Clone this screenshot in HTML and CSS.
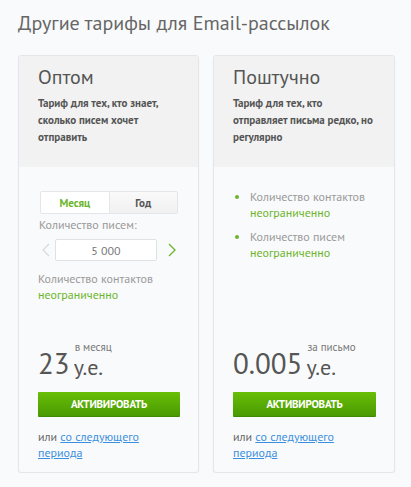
FILE: index.html
```html
<!DOCTYPE html>
<html lang="ru">
<head>
<meta charset="utf-8">
<title>Тарифы</title>
<link rel="stylesheet" href="styles.css">
</head>
<body>
<h1 class="title">Другие тарифы для Email-рассылок</h1>
<div class="cards">
  <div class="card">
    <div class="card-head">
      <div class="card-name">Оптом</div>
      <div class="card-desc">Тариф для тех, кто знает, сколько писем хочет отправить</div>
    </div>
    <div class="card-body">
      <div class="tabs">
        <div class="tab tab-active">Месяц</div>
        <div class="tab">Год</div>
      </div>
      <div class="label">Количество писем:</div>
      <div class="stepper">
        <span class="arrow arrow-off"><svg width="8" height="14" viewBox="0 0 8 14"><path d="M7 1 1 7l6 6" fill="none" stroke="currentColor" stroke-width="1.3"/></svg></span>
        <div class="num">5 000</div>
        <span class="arrow arrow-on"><svg width="8" height="14" viewBox="0 0 8 14"><path d="M1 1l6 6-6 6" fill="none" stroke="currentColor" stroke-width="1.3"/></svg></span>
      </div>
      <div class="feature">
        <div class="label">Количество контактов</div>
        <div class="green">неограниченно</div>
      </div>
      <div class="bottom">
        <div class="price">
          <span class="price-num">23</span>
          <span class="price-unit">
            <span class="price-per">в месяц</span>
            <span class="price-cur">у.е.</span>
          </span>
        </div>
        <button class="btn">АКТИВИРОВАТЬ</button>
        <div class="next"><span>или</span> <a href="#">со следующего</a> <a href="#">периода</a></div>
      </div>
    </div>
  </div>
  <div class="card">
    <div class="card-head">
      <div class="card-name">Поштучно</div>
      <div class="card-desc">Тариф для тех, кто отправляет письма редко, но регулярно</div>
    </div>
    <div class="card-body card-body-list">
      <ul class="list">
        <li><span class="label">Количество контактов</span><span class="green">неограниченно</span></li>
        <li><span class="label">Количество писем</span><span class="green">неограниченно</span></li>
      </ul>
      <div class="bottom">
        <div class="price">
          <span class="price-num">0.005</span>
          <span class="price-unit">
            <span class="price-per">за письмо</span>
            <span class="price-cur">у.е.</span>
          </span>
        </div>
        <button class="btn">АКТИВИРОВАТЬ</button>
        <div class="next"><span>или</span> <a href="#">со следующего</a> <a href="#">периода</a></div>
      </div>
    </div>
  </div>
</div>
</body>
</html>
```

FILE: styles.css
```css
* { box-sizing: border-box; }
html, body { margin: 0; }
body {
  background: #f9fafb;
  font-family: "PT Sans", Roboto, "Noto Sans", sans-serif;
  color: #555;
  padding: 11px 16px 0 18px;
}
.title {
  margin: 0;
  font-size: 20px;
  line-height: 24px;
  font-weight: 400;
  color: #666;
}
.cards {
  margin-top: 20px;
  display: grid;
  grid-template-columns: 181px 182px;
  column-gap: 14px;
}
.card {
  height: 418px;
  border: 1px solid #e3e6ea;
  border-radius: 3px;
  background: #f9fafb;
  box-shadow: 0 1px 2px rgba(0,0,0,0.04);
  display: flex;
  flex-direction: column;
  overflow: hidden;
}
.card-head {
  height: 111px;
  flex: none;
  background: #f1f2f1;
  padding: 9px 19px 0;
}
.card-name {
  font-size: 20px;
  line-height: 24px;
  font-weight: 300;
  color: #555;
}
.card-desc {
  margin-top: 6px;
  font-size: 11px;
  line-height: 17px;
  font-weight: 700;
  color: #555;
}
.card-body {
  flex: 1;
  display: flex;
  flex-direction: column;
  padding: 24px 18px 11px 19px;
}
.tabs {
  display: flex;
  margin-left: 2px;
  width: 138px;
  height: 23px;
  border: 1px solid #e4e6e8;
  border-radius: 2px;
  overflow: hidden;
}
.tab {
  flex: 1;
  display: flex;
  align-items: center;
  justify-content: center;
  font-size: 11px;
  font-weight: 700;
  color: #555;
  background: linear-gradient(#fafafa, #f0f0f0);
}
.tab + .tab { border-left: 1px solid #e4e6e8; }
.tab-active { background: #fff; color: #6cb52b; }
.label {
  display: block;
  font-size: 12px;
  line-height: 16px;
  color: #999;
}
.tabs + .label { margin-top: 3px; margin-left: 1px; }
.green {
  display: block;
  font-size: 12px;
  line-height: 16px;
  color: #6cb52b;
}
.stepper {
  display: flex;
  align-items: center;
  margin-top: 6px;
  height: 22px;
}
.arrow { width: 17px; display: flex; justify-content: center; }
.arrow-off { color: #d8dadc; }
.arrow-on { color: #6cb52b; margin-left: 6px; }
.num {
  width: 106px;
  height: 22px;
  background: #fff;
  border: 1px solid #dfe2e5;
  border-radius: 2px;
  display: flex;
  align-items: center;
  justify-content: center;
  font-size: 12px;
  color: #777;
}
.feature { margin-top: 10px; }
.bottom { margin-top: auto; }
.price {
  display: flex;
  align-items: flex-end;
}
.price-num {
  font-size: 29px;
  line-height: 28px;
  font-weight: 300;
  color: #555;
}
.price-unit {
  display: flex;
  flex-direction: column;
  margin-left: 4px;
}
.price-per {
  font-size: 11px;
  line-height: 11px;
  color: #777;
  margin-left: 1px;
  margin-bottom: 4px;
}
.price-cur {
  font-size: 22px;
  line-height: 20px;
  font-weight: 300;
  color: #555;
}
.btn {
  display: block;
  width: 100%;
  height: 25px;
  margin-top: 15px;
  border: 0;
  border-bottom: 1px solid #3d8a00;
  border-radius: 1px;
  background: linear-gradient(#68be06, #4a9a02);
  color: #fff;
  font-family: inherit;
  font-size: 11px;
  font-weight: 700;
  letter-spacing: -0.2px;
  padding: 0;
}
.next {
  margin-top: 12px;
  font-size: 12px;
  line-height: 16px;
  color: #666;
}
.next a { color: #3b8fe0; text-decoration: underline; }
.list {
  list-style: none;
  margin: 0;
  padding: 0;
}
.list li {
  position: relative;
  padding-left: 17px;
  margin-bottom: 8px;
}
.list li::before {
  content: "";
  position: absolute;
  left: 2px;
  top: 6px;
  width: 4px;
  height: 4px;
  border-radius: 50%;
  background: #6cb52b;
}
.card-body-list { padding-top: 22px; }
```
